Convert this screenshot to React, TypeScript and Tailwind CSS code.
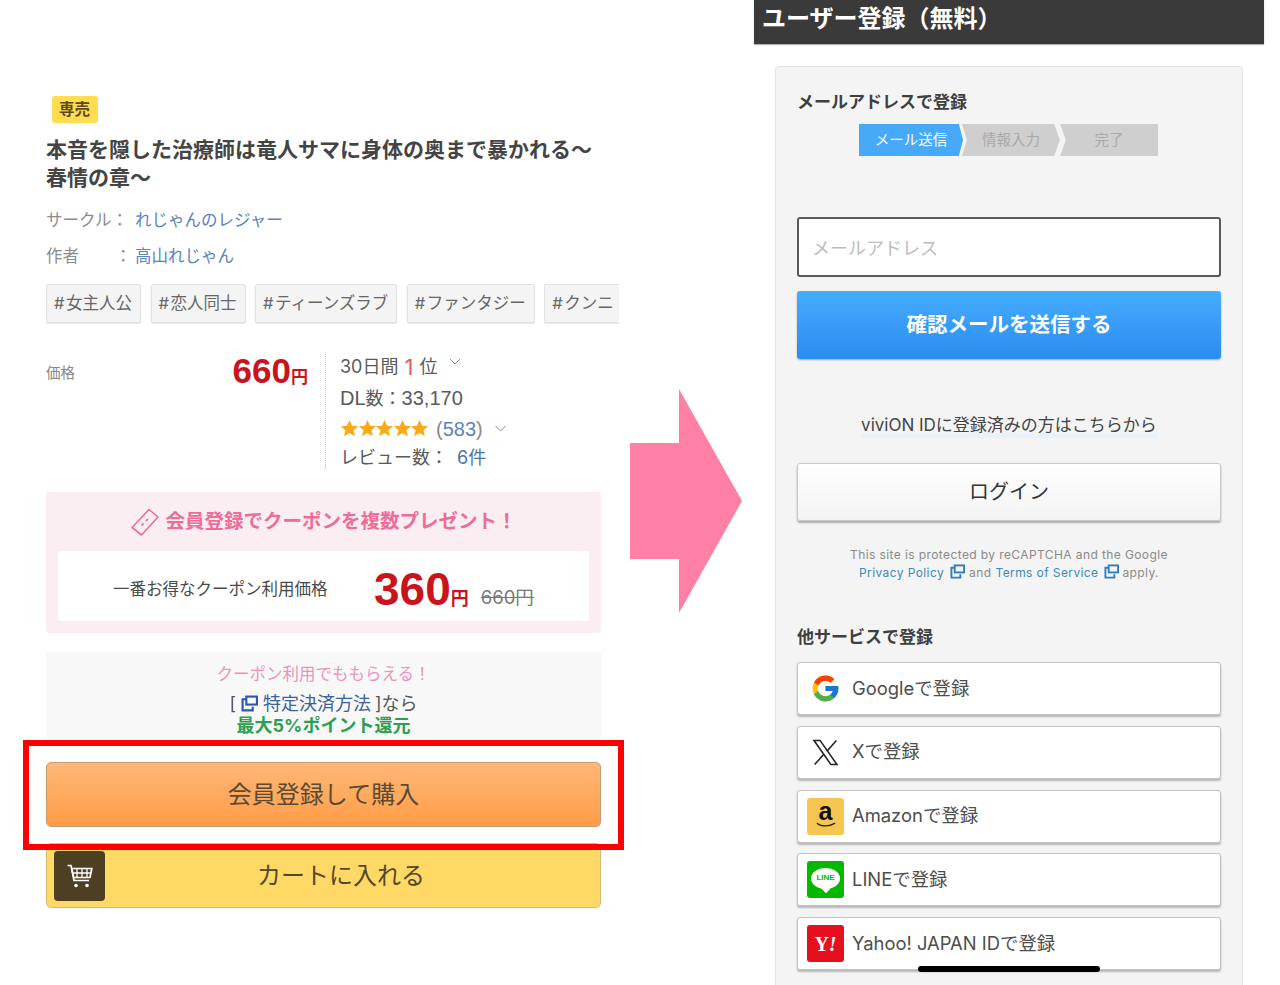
import React from 'react';
import { FcGoogle } from 'react-icons/fc';

const tags = ['女主人公', '恋人同士', 'ティーンズラブ', 'ファンタジー', 'クンニ'];

function ExternalIcon({ className }: { className: string }) {
  return (
    <svg viewBox="0 0 16 16" className={className} fill="none" stroke="currentColor" strokeWidth="2">
      <path d="M5 4H1.5v10.5H11V11" />
      <rect x="5" y="1.5" width="10" height="7.5" />
    </svg>
  );
}

function Chevron({ className }: { className: string }) {
  return (
    <svg viewBox="0 0 12 8" className={className} fill="none" stroke="#8a8a8a" strokeWidth="1">
      <path d="M1 1l5 5 5-5" />
    </svg>
  );
}

function Star() {
  return (
    <svg viewBox="0 0 20 20" className="h-[19px] w-[19px] -mr-[1.4px]" fill="#fba919">
      <path d="M10 1l2.7 6 6.3.6-4.8 4.2 1.5 6.4L10 14.8l-5.7 3.4 1.5-6.4L1 7.6 7.3 7z" />
    </svg>
  );
}

function CouponIcon() {
  return (
    <svg viewBox="0 0 30 30" className="mr-[5px] h-[30px] w-[30px]" fill="none" stroke="#ee6c97" strokeWidth="1.6">
      <path d="M19 2.5l9 7.5-16.5 18L2 20.5z" strokeLinejoin="round" />
      <path d="M11.5 18.5l2-2.2M16 14l2-2.2" strokeWidth="1.8" />
    </svg>
  );
}

function CartIcon() {
  return (
    <svg viewBox="0 0 28 28" className="h-[28px] w-[28px]" fill="none" stroke="#fff" strokeWidth="1.7">
      <path d="M1.5 3.5h3.5l3 15h15" />
      <path d="M5.8 6.5h20l-1.8 9H7.6z" />
      <path d="M11 6.5v9M16 6.5v9M21 6.5v9M6.6 11h18.4" strokeWidth="1.3" />
      <circle cx="10" cy="23.5" r="1.8" fill="#fff" stroke="none" />
      <circle cx="21" cy="23.5" r="1.8" fill="#fff" stroke="none" />
    </svg>
  );
}

function XIcon() {
  return (
    <svg viewBox="0 0 24 24" className="h-[29px] w-[29px]" fill="none" stroke="#222" strokeWidth="1.3">
      <path d="M2.5 2h5l14 20h-5z" />
      <path d="M21 2l-7.8 9M10.4 13.6L3 22" />
    </svg>
  );
}

function LineIcon() {
  return (
    <div className="flex h-[37px] w-[37px] flex-col items-center justify-center rounded-[3px] bg-[#06b700]">
      <div className="relative mt-[-3px] flex h-[21px] w-[29px] items-center justify-center rounded-[50%] bg-white text-[8px] font-bold text-[#06b700] font-['Liberation_Sans',sans-serif]">
        LINE
        <span className="absolute bottom-[-3px] left-[12px] h-[6px] w-[6px] rotate-45 bg-white" />
      </div>
    </div>
  );
}

function AmazonIcon() {
  return (
    <div className="flex h-[37px] w-[37px] flex-col items-center justify-center rounded-[3px] bg-[#f6c650]">
      <span className="mt-[-3px] text-[25px] font-bold leading-[21px] text-[#111] font-['Liberation_Sans',sans-serif]">a</span>
      <svg viewBox="0 0 22 6" className="h-[6px] w-[20px]" fill="none" stroke="#222" strokeWidth="1.5">
        <path d="M1 1c5 4 14 4 20 0" />
      </svg>
    </div>
  );
}

function YahooIcon() {
  return (
    <div className="flex h-[37px] w-[37px] items-center justify-center rounded-[3px] bg-[#e60f1e] text-[20px] font-bold text-white font-['Liberation_Serif',serif]">
      Y<span className="italic">!</span>
    </div>
  );
}

function SocialButton({ icon, label }: { icon: React.ReactNode; label: string }) {
  return (
    <div className="flex h-[53px] items-center rounded-[3px] border border-[#c4c4c4] bg-white pl-[9px] shadow-[0_2px_2px_rgba(0,0,0,0.25)]">
      <div className="flex h-[37px] w-[37px] items-center justify-center">{icon}</div>
      <span className="ml-[8px] text-[18.4px] text-[#4d4d4d]">{label}</span>
    </div>
  );
}

export default function App() {
  return (
    <div className="relative flex h-[985px] w-[1280px] overflow-hidden bg-white text-[#4a4a4a] font-['Inter','Noto_Sans_CJK_JP',sans-serif]">
      {/* Left: product page */}
      <div className="w-[630px] shrink-0 pl-[46px] pt-[96px]">
        <div className="ml-[6px] flex h-[27px] w-[46px] items-center justify-center rounded-[3px] bg-[#ffdc50] pr-[1px] pt-[1px] text-[15.5px] font-bold text-[#5b4a1c]">
          専売
        </div>
        <h1 className="mt-[13px] w-[560px] text-[21px] font-bold leading-[28px] text-[#444]">
          本音を隠した治療師は竜人サマに身体の奥まで暴かれる〜<br />春情の章〜
        </h1>
        <div className="mt-[16px] flex h-[24px] items-center text-[16.5px]">
          <span className="w-[89px] whitespace-nowrap text-[#8c8c8c]">サークル：</span>
          <span className="text-[#5b82bd]">れじゃんのレジャー</span>
        </div>
        <div className="mt-[12px] flex h-[24px] items-center text-[16.5px]">
          <span className="w-[69px] text-[#8c8c8c]">作者</span>
          <span className="w-[20px] text-[#8c8c8c]">：</span>
          <span className="text-[#5b82bd]">高山れじゃん</span>
        </div>
        <div className="mt-[16px] flex h-[40px] w-[573px] gap-[9.5px] overflow-hidden">
          {tags.map(tag => (
            <div
              key={tag}
              className="flex h-[39px] shrink-0 items-center rounded-[2px] border border-[#e2e2e2] bg-[#f4f4f4] pl-[7px] pr-[8px] text-[16.5px] text-[#666] shadow-[0_1px_1px_rgba(0,0,0,0.1)]"
            >
              <span className="w-[12px]">#</span>
              {tag}
            </div>
          ))}
        </div>

        {/* Price */}
        <div className="mt-[28px] flex h-[117px] w-[555px]">
          <div className="flex w-[262px] items-start justify-between pt-[10px]">
            <span className="text-[14.5px] text-[#888]">価格</span>
            <span className="mt-[-17px] whitespace-nowrap font-bold text-[#c8141c] font-['Liberation_Sans','Noto_Sans_CJK_JP',sans-serif]">
              <span className="text-[35px]">660</span>
              <span className="text-[17px]">円</span>
            </span>
          </div>
          <div className="ml-[17px] border-l border-dotted border-[#c4c4c4] pl-[14px] text-[18px] leading-[30px] text-[#5a5a5a]">
            <div className="flex h-[30px] items-center">
              30日間<span className="mx-[6px] text-[22px] text-[#e06060]">1</span>位
              <Chevron className="mb-[10px] ml-[12px] h-[8px] w-[12px]" />
            </div>
            <div className="h-[32px] leading-[32px] font-['Liberation_Sans','Noto_Sans_CJK_JP',sans-serif] text-[20px]">
              DL<span className="text-[18px]">数：</span>33,170
            </div>
            <div className="flex h-[29px] items-center">
              <Star /><Star /><Star /><Star /><Star />
              <span className="ml-[8px] text-[20px] text-[#8a8a8a] font-['Liberation_Sans',sans-serif]">(<span className="text-[#5b82bd]">583</span>)</span>
              <Chevron className="ml-[11px] h-[8px] w-[13px]" />
            </div>
            <div className="flex h-[30px] items-center">
              レビュー数：<span className="ml-[9px] text-[#4a72ad]">6件</span>
            </div>
          </div>
        </div>

        {/* Coupon */}
        <div className="mt-[23px] h-[141px] w-[555px] rounded-[3px] bg-[#fbeef2] px-[12px] pt-[14px]">
          <div className="flex h-[31px] items-center justify-center text-[19.5px] font-bold text-[#ee6c97]">
            <CouponIcon />
            会員登録でクーポンを複数プレゼント！
          </div>
          <div className="mt-[14px] flex h-[70px] items-center rounded-[3px] bg-white pl-[55px]">
            <span className="mt-[6px] w-[261px] whitespace-nowrap text-[16.5px] text-[#4a4a4a]">一番お得なクーポン利用価格</span>
            <span className="mt-[6px] whitespace-nowrap font-bold text-[#c8141c] font-['Liberation_Sans','Noto_Sans_CJK_JP',sans-serif]">
              <span className="text-[46px]">360</span>
              <span className="text-[18px]">円</span>
            </span>
            <span className="ml-[12px] mt-[24px] text-[18.5px] text-[#777] line-through">660円</span>
          </div>
        </div>

        {/* Points */}
        <div className="mt-[19px] flex h-[89px] w-[555px] flex-col items-center bg-[#f8f8f8] pt-[10px] text-[18px]">
          <div className="h-[25px] text-[16.5px] leading-[25px] text-[#ec93bd]">クーポン利用でももらえる！</div>
          <div className="mt-[3px] flex h-[26px] items-center text-[#555]">
            [<ExternalIcon className="mx-[5px] h-[17px] w-[17px] text-[#2a5aa8]" />
            <span className="text-[#3c619f]">特定決済方法</span>
            <span className="ml-[4px]">]なら</span>
          </div>
          <div className="h-[22px] text-[18px] font-bold leading-[20px] text-[#2e9e4f]">最大5%ポイント還元</div>
        </div>

        {/* Buttons */}
        <div className="mt-[21px] flex h-[65px] w-[555px] items-center justify-center rounded-[5px] border border-[#c99b74] bg-gradient-to-b from-[#ffb877] to-[#ff9c45] text-[24px] text-[#5d4a32]">
          会員登録して購入
        </div>
        <div className="mt-[16px] flex h-[65px] w-[555px] items-center rounded-[5px] border border-[#d6bb72] bg-[#ffd965] pl-[7px]">
          <div className="flex h-[50px] w-[51px] items-center justify-center rounded-[4px] bg-[#4e3f22]">
            <CartIcon />
          </div>
          <span className="ml-[152px] text-[24px] text-[#55472c]">カートに入れる</span>
        </div>
      </div>

      {/* Arrow */}
      <svg viewBox="0 0 112 224" className="mt-[389px] h-[224px] w-[112px] shrink-0" fill="#ff80a5">
        <path d="M0 54h49V0l63 112-63 112v-54H0z" />
      </svg>

      {/* Right: registration form */}
      <div className="ml-[12px] w-[510px] shrink-0">
        <div className="flex h-[44px] items-center bg-[#3a3a3a] pb-[6px] pl-[8px] text-[24px] font-bold text-white shadow-[0_1px_1px_rgba(0,0,0,0.3)]">
          ユーザー登録（無料）
        </div>
        <div className="mx-[21px] mt-[22px] h-[930px] rounded-[4px] border border-[#e3e3e3] bg-[#f4f4f4] px-[21px] pt-[23px]">
          <div className="h-[24px] text-[17px] font-bold leading-[24px] text-[#3f3f3f]">メールアドレスで登録</div>
          <div className="ml-[62px] mt-[10px] flex h-[32px] w-[300px] text-[14.5px]">
            <div className="flex h-full w-[104px] items-center justify-center bg-[#47a9fa] text-white [clip-path:polygon(0_0,96%_0,100%_50%,96%_100%,0_100%)]">
              メール送信
            </div>
            <div className="ml-[-1px] flex h-full w-[98px] items-center justify-center bg-[#cfcfcf] text-[#a9a9a9] [clip-path:polygon(0_0,94%_0,100%_50%,94%_100%,0_100%,5%_50%)]">
              情報入力
            </div>
            <div className="flex h-full w-[98px] items-center justify-center bg-[#cfcfcf] text-[#a9a9a9] [clip-path:polygon(0_0,100%_0,100%_100%,0_100%,6%_50%)]">
              完了
            </div>
          </div>
          <div className="mt-[61px] flex h-[60px] items-center rounded-[3px] border-2 border-[#5a5a5a] bg-white pl-[13px] pt-[2px] text-[18px] text-[#bdbdbd]">
            メールアドレス
          </div>
          <div className="mt-[14px] flex h-[68px] items-center justify-center rounded-[3px] bg-gradient-to-b from-[#46adfd] to-[#2a8cf0] text-[20.5px] font-bold text-white shadow-[0_1px_2px_rgba(0,0,0,0.3)]">
            確認メールを送信する
          </div>
          <div className="mt-[53px] flex h-[26px] justify-center">
            <span className="h-[26px] text-[17px] leading-[26px] text-[#444] shadow-[inset_0_-5px_0_#e6f2fc]">viviON IDに登録済みの方はこちらから</span>
          </div>
          <div className="mt-[25px] flex h-[58px] items-center justify-center rounded-[3px] border border-[#c8c8c8] bg-gradient-to-b from-white to-[#f3f3f3] text-[20px] text-[#333] shadow-[0_2px_2px_rgba(0,0,0,0.3)]">
            ログイン
          </div>
          <div className="mt-[25px] text-center text-[12px] leading-[18px] tracking-[0.4px] text-[#8a8a8a]">
            <div>This site is protected by reCAPTCHA and the Google</div>
            <div className="flex items-center justify-center">
              <span className="text-[#3f88bd]">Privacy Policy</span>
              <ExternalIcon className="ml-[6px] mb-[3px] h-[15px] w-[15px] text-[#2d7fbd]" />
              <span className="ml-[4px]">and</span>
              <span className="ml-[4px] text-[#3f88bd]">Terms of Service</span>
              <ExternalIcon className="ml-[6px] mb-[3px] h-[15px] w-[15px] text-[#2d7fbd]" />
              <span className="ml-[3px]">apply.</span>
            </div>
          </div>
          <div className="mt-[43px] h-[24px] text-[17px] font-bold leading-[24px] text-[#3f3f3f]">他サービスで登録</div>
          <div className="mt-[13px] flex flex-col gap-[10.75px]">
            <SocialButton icon={<FcGoogle className="h-[31px] w-[31px]" />} label="Googleで登録" />
            <SocialButton icon={<XIcon />} label="Xで登録" />
            <SocialButton icon={<AmazonIcon />} label="Amazonで登録" />
            <SocialButton icon={<LineIcon />} label="LINEで登録" />
            <SocialButton icon={<YahooIcon />} label="Yahoo! JAPAN IDで登録" />
          </div>
        </div>
      </div>

      {/* Overlays */}
      <div className="absolute left-[23px] top-[740px] h-[110px] w-[601px] border-[6px] border-[#ff0000]" />
      <div className="absolute left-[918px] top-[966px] h-[6px] w-[182px] rounded-full bg-black" />
    </div>
  );
}
